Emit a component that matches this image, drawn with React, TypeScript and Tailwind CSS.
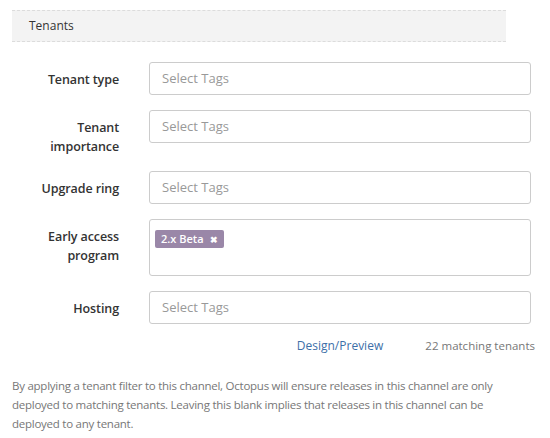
export default function App() {
  const rows = [
    { label: "Tenant type" },
    { label: "Tenant importance" },
    { label: "Upgrade ring" },
    { label: "Early access program", tags: ["2.x Beta"] },
    { label: "Hosting" },
  ];

  return (
    <div className="min-h-[438px] bg-white pt-[10px] font-['Open_Sans',sans-serif] text-[#333]">
      <div className="ml-3 mr-[44px] flex h-[32px] items-center border-y border-dashed border-[#dcdcdc] bg-[#f3f3f3] pl-[17px] text-[12px]">
        Tenants
      </div>

      <div className="mt-[20px] grid grid-cols-[84px_1fr] gap-x-[30px] gap-y-[15px] pl-[35px] pr-[19px]">
        {rows.map((row) => (
          <div key={row.label} className="contents">
            <label className="pt-[8px] text-right text-[12.5px] font-semibold leading-[19px] tracking-[-0.1px] text-[#333]">
              {row.label}
            </label>
            {row.tags ? (
              <div className="h-[57px] rounded-[3px] border border-[#ccc] bg-white p-[5px]">
                {row.tags.map((t) => (
                  <span
                    key={t}
                    className="inline-flex h-[18px] items-center gap-[6px] rounded-[2px] bg-[#9a87a8] px-[6px] text-[11px] font-semibold text-white"
                  >
                    {t}
                    <span className="text-[9px] leading-none">✖</span>
                  </span>
                ))}
              </div>
            ) : (
              <div className="flex h-[33px] items-center rounded-[3px] border border-[#ccc] bg-white px-3 text-[13px] text-[#999]">
                Select Tags
              </div>
            )}
          </div>
        ))}

        <div />
        <div className="-mt-[2px] grid grid-cols-[1fr_auto_1fr] items-center">
          <div />
          <a href="#" className="text-[12px] text-[#3d6fa8]">
            Design/Preview
          </a>
          <span className="-mr-[4px] justify-self-end text-[11.5px] text-[#777]">
            22 matching tenants
          </span>
        </div>
      </div>

      <p className="mt-[21px] px-3 text-[11.5px] leading-[19px] tracking-[-0.25px] text-[#777]">
        By applying a tenant filter to this channel, Octopus will ensure releases in this channel are only
        <br />
        deployed to matching tenants. Leaving this blank implies that releases in this channel can be
        <br />
        deployed to any tenant.
      </p>
    </div>
  );
}
